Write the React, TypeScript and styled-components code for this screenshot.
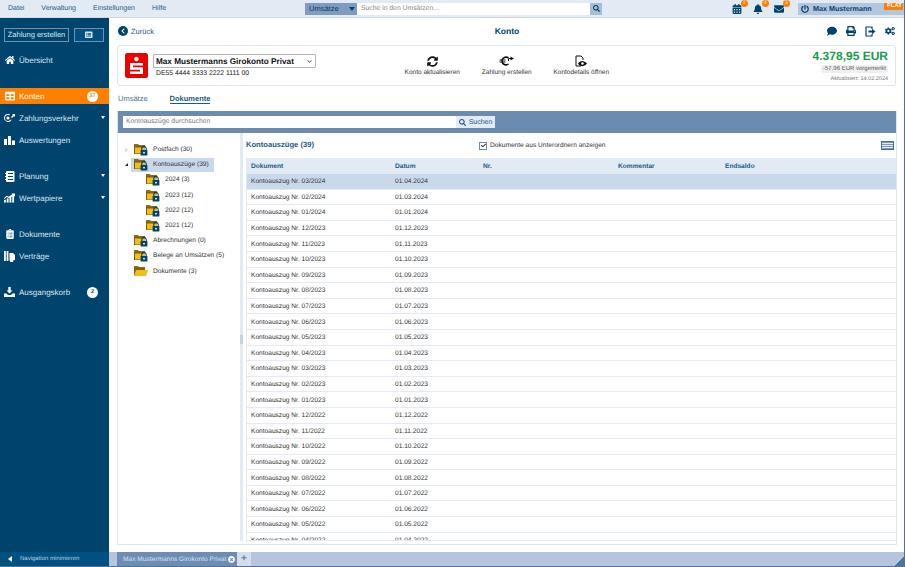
import React from "react";
import styled, { createGlobalStyle } from "styled-components";
import {
  FaHome,
  FaChevronDown,
  FaSearch,
  FaBell,
  FaEnvelope,
  FaPrint,
  FaComment,
  FaCogs,
  FaSyncAlt,
  FaChevronLeft,
  FaTimesCircle,
  FaCheck,
  FaPowerOff,
  FaTable,
  FaClipboardList,
  FaListAlt,
  FaCalendarAlt,
} from "react-icons/fa";

const Colors = {
  navy: "#00446e",
  navyLight: "#005080",
  orange: "#ff7f00",
  pale: "#e2eaf3",
  band: "#6b8cb0",
  status: "#b4c6dc",
  selected: "#c9d9eb",
  line: "#dde5ef",
  text: "#333",
  link: "#1d5a85",
};

const GlobalStyle = createGlobalStyle`
  html, body { margin: 0; padding: 0; background: #fff; }
  body {
    font-family: "Liberation Sans", Arial, sans-serif;
    text-rendering: geometricPrecision;
  }
`;

const Page = styled.div`
  width: 905px;
  height: 567px;
  display: flex;
  flex-direction: column;
  overflow: hidden;
  border-right: 1px solid #4f7396;
  border-bottom: 1px solid #4f7396;
  box-sizing: border-box;
  color: ${Colors.text};
`;

/* top bar */
const TopBar = styled.div`
  height: 17px;
  flex: none;
  display: flex;
  align-items: center;
  background: ${Colors.pale};
  border-bottom: 1px solid #cfdbe8;
`;
const Menu = styled.div`
  display: flex;
  gap: 17px;
  padding-left: 8px;
  width: 305px;
  box-sizing: border-box;
  font-size: 7px;
  color: #2a5a80;
`;
const SearchGroup = styled.div`
  display: flex;
  height: 12px;
  width: 297px;
`;
const ScopeSelect = styled.div`
  width: 52px;
  background: #7f9cc0;
  color: #0d3a5c;
  font-size: 7.5px;
  line-height: 12px;
  padding-left: 4px;
  box-sizing: border-box;
  position: relative;
  &::after {
    content: "";
    position: absolute;
    right: 2px;
    top: 4px;
    border-left: 3px solid transparent;
    border-right: 3px solid transparent;
    border-top: 4px solid ${Colors.navy};
  }
`;
const GlobalInput = styled.div`
  flex: 1;
  background: #fff;
  color: #888;
  font-size: 6.8px;
  line-height: 12px;
  padding-left: 4px;
`;
const GlobalButton = styled.div`
  width: 12px;
  background: #a9bdd5;
  color: ${Colors.navy};
  display: flex;
  align-items: center;
  justify-content: center;
  font-size: 7px;
`;
const TopIcons = styled.div`
  margin-left: auto;
  display: flex;
  align-items: center;
  gap: 11px;
  color: ${Colors.navy};
  font-size: 10px;
`;
const TopIcon = styled.span`
  position: relative;
  display: flex;
  width: 10px;
  justify-content: center;
`;
const Count = styled.span`
  position: absolute;
  right: -6px;
  top: -4px;
  width: 7px;
  height: 7px;
  border-radius: 50%;
  background: ${Colors.orange};
  color: #fff;
  font-size: 5px;
  line-height: 7px;
  text-align: center;
`;
const UserBlock = styled.div`
  position: relative;
  width: 106px;
  height: 12px;
  margin-left: 14px;
  background: ${Colors.status};
  display: flex;
  align-items: center;
  gap: 4px;
  padding-left: 3px;
  box-sizing: border-box;
  color: ${Colors.navy};
  font-size: 7.2px;
  font-weight: bold;
  svg { font-size: 8px; }
`;
const Flat = styled.span`
  position: absolute;
  right: 1px;
  top: 0;
  background: ${Colors.orange};
  color: #fff;
  font-size: 6px;
  line-height: 7px;
  padding: 0 1px 0 3px;
`;

/* body */
const Body = styled.div`
  flex: 1;
  min-height: 0;
  display: flex;
`;
const Sidebar = styled.nav`
  width: 109px;
  flex: none;
  background: ${Colors.navy};
  display: flex;
  flex-direction: column;
  color: #dbe6f0;
`;
const SideButtons = styled.div`
  display: flex;
  gap: 5px;
  padding: 10px 5px 0 4px;
  height: 14px;
  margin-bottom: 10px;
`;
const SideButton = styled.div<{ $wide?: boolean }>`
  width: ${(p) => (p.$wide ? "65px" : "30px")};
  box-sizing: border-box;
  height: 14px;
  border: 1px solid #6d93b3;
  background: ${(p) => (p.$wide ? "transparent" : Colors.navyLight)};
  font-size: 7.5px;
  line-height: 12px;
  text-align: center;
  display: flex;
  align-items: center;
  justify-content: center;
`;
const NavGroup = styled.div`
  margin-bottom: 14px;
`;
const NavItem = styled.div<{ $active?: boolean }>`
  position: relative;
  height: 16px;
  margin-bottom: 6px;
  display: flex;
  align-items: center;
  padding-left: 4px;
  gap: 4px;
  font-size: 8px;
  background: ${(p) => (p.$active ? Colors.orange : "transparent")};
  color: ${(p) => (p.$active ? "#fff" : "#dbe6f0")};
`;
const NavIcon = styled.span`
  width: 11px;
  display: flex;
  justify-content: center;
  font-size: 10px;
  color: #fff;
`;
const NavBadge = styled.span<{ $active?: boolean }>`
  position: absolute;
  right: 11px;
  top: 2.5px;
  width: 11px;
  height: 11px;
  border-radius: 50%;
  background: #fff;
  color: ${(p) => (p.$active ? Colors.orange : Colors.navy)};
  font-size: 5.5px;
  font-weight: bold;
  line-height: 11px;
  text-align: center;
`;
const NavCaret = styled.span`
  position: absolute;
  right: 4px;
  top: 6px;
  border-left: 2.5px solid transparent;
  border-right: 2.5px solid transparent;
  border-top: 3.5px solid #fff;
`;
const SideFooter = styled.div`
  margin-top: auto;
  height: 14px;
  background: ${Colors.navyLight};
  display: flex;
  align-items: center;
  gap: 8px;
  padding-left: 8px;
  font-size: 6px;
  color: #b9cfe0;
`;
const FooterArrow = styled.span`
  border-top: 3px solid transparent;
  border-bottom: 3px solid transparent;
  border-right: 4px solid #fff;
`;

const Main = styled.main`
  flex: 1;
  min-width: 0;
  display: flex;
  flex-direction: column;
`;
const Content = styled.div`
  flex: 1;
  min-height: 0;
  display: flex;
  flex-direction: column;
  padding: 0 7px 7px 8px;
`;
const HeaderRow = styled.div`
  height: 26px;
  padding-bottom: 1px;
  flex: none;
  display: grid;
  grid-template-columns: 1fr auto 1fr;
  align-items: center;
`;
const Back = styled.div`
  display: flex;
  align-items: center;
  gap: 3px;
  font-size: 7.5px;
  color: #2a5a80;
  padding-left: 1px;
`;
const BackCircle = styled.span`
  width: 10px;
  height: 10px;
  border-radius: 50%;
  background: ${Colors.navy};
  color: #fff;
  display: flex;
  align-items: center;
  justify-content: center;
  font-size: 6px;
`;
const Title = styled.div`
  font-size: 8.5px;
  font-weight: bold;
  color: ${Colors.navy};
`;
const HeaderIcons = styled.div`
  display: flex;
  justify-content: flex-end;
  align-items: center;
  gap: 9px;
  font-size: 10px;
  color: ${Colors.navy};
  padding-right: 2px;
`;

const AccountCard = styled.section`
  height: 41px;
  flex: none;
  box-sizing: border-box;
  border: 1px solid ${Colors.line};
  border-radius: 3px;
  display: flex;
  align-items: center;
  padding: 0 7px;
  margin-right: 1px;
  position: relative;
`;
const AccountInfo = styled.div`
  width: 163px;
  margin-left: 5px;
  flex: none;
`;
const AccountSelect = styled.div`
  height: 14px;
  box-sizing: border-box;
  border: 1px solid #b5b5b5;
  border-radius: 1px;
  display: flex;
  align-items: center;
  justify-content: space-between;
  padding: 0 3px 0 2px;
  font-size: 8.2px;
  font-weight: bold;
  color: #111;
  svg { font-size: 5px; color: #555; }
`;
const Iban = styled.div`
  font-size: 6.8px;
  padding: 2px 0 0 3px;
  color: #222;
`;
const Actions = styled.div`
  display: flex;
  margin-left: 79px;
`;
const Action = styled.div`
  width: 74.5px;
  display: flex;
  flex-direction: column;
  align-items: center;
  gap: 2px;
  font-size: 6.5px;
  color: #333;
  white-space: nowrap;
`;
const ActionIcon = styled.span`
  height: 12px;
  font-size: 11px;
  color: #111;
  display: flex;
  align-items: center;
`;
const Balance = styled.div`
  margin-left: auto;
  text-align: right;
  display: flex;
  flex-direction: column;
  align-items: flex-end;
`;
const Amount = styled.div`
  font-size: 12px;
  font-weight: bold;
  color: #1a9a50;
  line-height: 14px;
`;
const Pending = styled.div`
  font-size: 6px;
  color: #555;
  background: #efefef;
  border-radius: 3px;
  padding: 0 2px;
  line-height: 8px;
  margin-top: 2px;
`;
const Updated = styled.div`
  font-size: 5.5px;
  color: #777;
  margin-top: 3px;
`;

const Tabs = styled.div`
  height: 26px;
  flex: none;
  display: flex;
  gap: 22px;
  align-items: center;
  padding-left: 1px;
  font-size: 7.5px;
`;
const Tab = styled.span<{ $active?: boolean }>`
  color: ${(p) => (p.$active ? Colors.link : "#4a7396")};
  font-weight: ${(p) => (p.$active ? "bold" : "normal")};
  border-bottom: 1px solid ${(p) => (p.$active ? Colors.link : "transparent")};
`;

const Panel = styled.section`
  flex: 1;
  min-height: 0;
  display: flex;
  flex-direction: column;
  border: 1px solid ${Colors.line};
  border-top: 0;
  margin-top: -1px;
`;
const SearchBand = styled.div`
  height: 22px;
  flex: none;
  background: ${Colors.band};
  display: flex;
  align-items: center;
  padding-left: 5px;
`;
const SearchInput = styled.div`
  width: 333px;
  height: 12px;
  background: #fff;
  font-size: 6.8px;
  line-height: 12px;
  color: #777;
  padding-left: 3px;
  box-sizing: border-box;
`;
const SearchButton = styled.div`
  width: 39px;
  height: 12px;
  background: ${Colors.pale};
  color: ${Colors.link};
  font-size: 7px;
  display: flex;
  align-items: center;
  justify-content: center;
  gap: 3px;
  svg { font-size: 7px; }
`;
const Split = styled.div`
  flex: 1;
  min-height: 0;
  display: flex;
  padding-bottom: 3px;
`;
const Tree = styled.div`
  width: 122px;
  flex: none;
  box-sizing: border-box;
  padding-top: 9px;
`;
const TreeRow = styled.div<{ $level?: number }>`
  height: 15.2px;
  display: flex;
  align-items: center;
  padding-left: ${(p) => (p.$level ? 19 : 7)}px;
`;
const Twisty = styled.span<{ $open?: boolean }>`
  width: 0;
  height: 0;
  margin-right: 3px;
  ${(p) =>
    p.$open
      ? `border-left: 3px solid transparent; border-bottom: 3px solid #222;`
      : `border-top: 3px solid transparent; border-bottom: 3px solid transparent; border-left: 3px solid #ddd;`}
`;
const TwistySpace = styled.span`
  width: 6px;
`;
const TreeLabel = styled.div<{ $selected?: boolean }>`
  display: flex;
  align-items: center;
  height: 14px;
  box-sizing: border-box;
  gap: 5px;
  padding: 0 3px;
  font-size: 6.6px;
  white-space: nowrap;
  color: #333;
  background: ${(p) => (p.$selected ? Colors.selected : "transparent")};
  width: ${(p) => (p.$selected ? "83px" : "auto")};
`;
const Splitter = styled.div`
  width: 3px;
  flex: none;
  background: ${Colors.pale};
  margin-right: 3px;
  position: relative;
  &::after {
    content: "";
    position: absolute;
    left: 0;
    top: 202px;
    width: 3px;
    height: 9px;
    background: #c5d2e0;
  }
`;
const ListPane = styled.div`
  flex: 1;
  min-width: 0;
  display: flex;
  flex-direction: column;
`;
const ListHead = styled.div`
  height: 25px;
  flex: none;
  display: flex;
  align-items: center;
  position: relative;
`;
const ListTitle = styled.div`
  width: 233px;
  font-size: 7.6px;
  font-weight: bold;
  color: ${Colors.link};
  margin-top: -2px;
`;
const CheckBox = styled.span`
  width: 8px;
  height: 8px;
  box-sizing: border-box;
  border: 1px solid #6b8cb0;
  display: flex;
  align-items: center;
  justify-content: center;
  font-size: 5px;
  color: #333;
  margin-right: 3px;
`;
const CheckLabel = styled.span`
  font-size: 6.6px;
  color: #333;
`;
const ListButton = styled.span`
  margin-left: auto;
  margin-right: 2px;
  width: 13px;
  height: 9px;
  box-sizing: border-box;
  border: 1px solid #3f7096;
  background: repeating-linear-gradient(#7e9ab6 0 1px, #e2eaf3 1px 2px);
`;
const Table = styled.div`
  flex: 1;
  min-height: 0;
  overflow: hidden;
  border: solid ${Colors.pale};
  border-width: 0 0 1px 1px;
`;
const columns = "144px 88px 135px 107px 1fr";
const HeadRow = styled.div`
  display: grid;
  grid-template-columns: ${columns};
  height: 16px;
  align-items: center;
  background: ${Colors.pale};
  font-size: 6.6px;
  font-weight: bold;
  color: ${Colors.link};
  padding-left: 4px;
`;
const Row = styled.div<{ $selected?: boolean }>`
  display: grid;
  grid-template-columns: ${columns};
  height: 15.6px;
  box-sizing: border-box;
  align-items: center;
  border-bottom: 1px solid ${Colors.pale};
  padding: 1px 0 0 4px;
  font-size: 6.6px;
  color: #333;
  background: ${(p) => (p.$selected ? Colors.selected : "#fff")};
`;

const TabBar = styled.div`
  height: 14px;
  flex: none;
  background: ${Colors.status};
  display: flex;
  padding-left: 8px;
  position: relative;
`;
const OpenTab = styled.div`
  width: 120px;
  box-sizing: border-box;
  background: #6f8db2;
  color: #d6e2ef;
  font-size: 6.6px;
  white-space: nowrap;
  display: flex;
  align-items: center;
  justify-content: space-between;
  padding: 0 2px 0 6px;
  svg { font-size: 7px; color: #fff; }
`;
const AddTab = styled.div`
  width: 14px;
  background: #d4dfec;
  color: #5a80a6;
  font-size: 10px;
  line-height: 14px;
  text-align: center;
  font-weight: bold;
`;
const Grip = styled.span`
  position: absolute;
  right: 0;
  bottom: 0;
  width: 9px;
  height: 9px;
  background: linear-gradient(135deg, transparent 50%, #4f7396 50%);
`;

const SparkasseLogo = () => (
  <svg width="23" height="25" viewBox="0 0 23 25">
    <rect width="23" height="25" rx="2.5" fill="#ee0000" />
    <circle cx="11.5" cy="6" r="2.3" fill="#fff" />
    <path d="M5 10h13v2.5H8v1.8h10V21H5v-2.5h10v-1.8H5z" fill="#fff" />
  </svg>
);

const Folder = ({ locked = true }: { locked?: boolean }) => (
  <svg width="14" height="13" viewBox="0 0 14 13">
    <path d="M0 1h4l1 1h6v2H0z" fill="#8a6d1c" />
    <path d="M0 3h11v8H0z" fill="#7a5f14" />
    <path d={locked ? "M1 4.5h10v6H1z" : "M2 5h12l-2 6H0z"} fill="#f2bd1a" />
    {locked && (
      <g>
        <path
          d="M7.8 7V5.6a2.2 2.2 0 0 1 4.4 0V7"
          fill="none"
          stroke="#00446e"
          strokeWidth="1.1"
        />
        <rect x="6.6" y="7" width="6.8" height="5.6" rx=".6" fill="#00446e" />
        <circle cx="10" cy="9.7" r=".9" fill="#fff" />
      </g>
    )}
  </svg>
);

/* sidebar drawings */
const TransferIcon = () => (
  <svg width="11" height="10" viewBox="0 0 11 10" fill="currentColor">
    <path d="M4 1a4 4 0 1 0 3.6 5.8H6.2A2.6 2.6 0 0 1 4 8 3 3 0 0 1 4 2c.5 0 1 .1 1.4.3l.7-.9A4 4 0 0 0 4 1z" />
    <circle cx="4" cy="5" r="1.6" />
    <path d="M7 4l2-2-1-1h3v3l-1-1-2 2z" />
  </svg>
);
const BarsIcon = () => (
  <svg width="11" height="10" viewBox="0 0 11 10" fill="currentColor">
    <rect x="0" y="4" width="3" height="6" />
    <rect x="4" y="1" width="3" height="9" />
    <rect x="8" y="5.5" width="3" height="4.5" />
  </svg>
);
const PlanIcon = () => (
  <svg width="10" height="11" viewBox="0 0 10 11">
    <rect x="1" y="0" width="8.5" height="11" rx="1" fill="currentColor" />
    <path d="M3 2.5h5M3 5.5h5M3 8.5h5" stroke="#00446e" strokeWidth="1" />
    <path d="M0 2.5h2M0 5.5h2M0 8.5h2" stroke="currentColor" strokeWidth="1" />
  </svg>
);
const StockIcon = () => (
  <svg width="12" height="10" viewBox="0 0 12 10" fill="currentColor">
    <rect x="0" y="7" width="2" height="3" />
    <rect x="3" y="5.5" width="2" height="4.5" />
    <rect x="6" y="4" width="2" height="6" />
    <rect x="9" y="2.5" width="2" height="7.5" />
    <path d="M0 5l3-2.5 2 1L9 1 8 0h4v3.5L11 2.500 5.200 5 3 4 .5 6z" />
  </svg>
);
const ContractIcon = () => (
  <svg width="11" height="11" viewBox="0 0 11 11" fill="currentColor">
    <rect x="0" y="0" width="1.8" height="10" />
    <rect x="2.600" y="0" width="1.8" height="10" />
    <path d="M5.500 2h3.500l2 2v5H9.500l-.5 2H6.500l-1-2z" />
  </svg>
);
const OutboxIcon = () => (
  <svg width="11" height="10" viewBox="0 0 11 10" fill="currentColor">
    <path d="M4.300 0h2.400v3.500H8.500l-3 3-3-3h1.800z" />
    <path d="M0 6.500h2.500L4 8h3l1.500-1.500H11V10H0z" />
  </svg>
);

/* toolbar drawings */
const ExportIcon = () => (
  <svg width="11" height="11" viewBox="0 0 11 11">
    <path
      d="M7 3V1H1v9h6V8"
      fill="none"
      stroke="currentColor"
      strokeWidth="1.200"
    />
    <path d="M3.500 4.500H7V2.800L10.500 5.500 7 8.200V6.500H3.500z" fill="currentColor" />
  </svg>
);
const EuroArrowIcon = () => (
  <svg width="15" height="12" viewBox="0 0 15 12">
    <path
      d="M9.500 3A4 4 0 0 0 3 6a4 4 0 0 0 6.500 3"
      fill="none"
      stroke="currentColor"
      strokeWidth="1.600"
    />
    <path d="M0.500 5h6M0.500 7h6" stroke="currentColor" strokeWidth="1" />
    <path
      d="M9.500 6V3.500H12"
      fill="none"
      stroke="currentColor"
      strokeWidth="1"
    />
    <path d="M11.500 1.500L15 3.500 11.500 5.500z" fill="currentColor" />
  </svg>
);
const FileEyeIcon = () => (
  <svg width="14" height="12" viewBox="0 0 14 12">
    <path
      d="M7 11H2V1h5l2 2v2"
      fill="none"
      stroke="currentColor"
      strokeWidth="1"
    />
    <path d="M4 8.500c2-3.500 6-3.500 9 0-3 3.500-7 3.500-9 0z" fill="currentColor" />
    <circle cx="8.500" cy="8.500" r="1.300" fill="#fff" />
  </svg>
);

const navGroups = [
  [{ label: "Übersicht", icon: <FaHome /> }],
  [
    { label: "Konten", icon: <FaTable />, active: true, badge: "37" },
    { label: "Zahlungsverkehr", icon: <TransferIcon />, caret: true },
    { label: "Auswertungen", icon: <BarsIcon /> },
  ],
  [
    { label: "Planung", icon: <PlanIcon />, caret: true },
    { label: "Wertpapiere", icon: <StockIcon />, caret: true },
  ],
  [
    { label: "Dokumente", icon: <FaClipboardList /> },
    { label: "Verträge", icon: <ContractIcon /> },
  ],
  [{ label: "Ausgangskorb", icon: <OutboxIcon />, badge: "2" }],
];

const treeItems = [
  { label: "Postfach (30)", twisty: "closed" },
  { label: "Kontoauszüge (39)", twisty: "open", selected: true },
  { label: "2024 (3)", level: 1 },
  { label: "2023 (12)", level: 1 },
  { label: "2022 (12)", level: 1 },
  { label: "2021 (12)", level: 1 },
  { label: "Abrechnungen (0)" },
  { label: "Belege an Umsätzen (5)" },
  { label: "Dokumente (3)", open: true },
];

const pad = (n: number) => String(n).padStart(2, "0");
const statements: { name: string; date: string }[] = [
  { name: "03/2024", date: "01.04.2024" },
  { name: "02/2024", date: "01.03.2024" },
  { name: "01/2024", date: "01.01.2024" },
];
for (let i = 0; i < 21; i++) {
  const month = ((12 - i - 1 + 24) % 12) + 1;
  const year = i < 12 ? 2023 : 2022;
  statements.push({
    name: `${pad(month)}/${year}`,
    date: `01.${pad(month)}.${year}`,
  });
}

export default function App() {
  return (
    <Page>
      <GlobalStyle />
      <TopBar>
        <Menu>
          <span>Datei</span>
          <span>Verwaltung</span>
          <span>Einstellungen</span>
          <span>Hilfe</span>
        </Menu>
        <SearchGroup>
          <ScopeSelect>Umsätze</ScopeSelect>
          <GlobalInput>Suche in den Umsätzen...</GlobalInput>
          <GlobalButton>
            <FaSearch />
          </GlobalButton>
        </SearchGroup>
        <TopIcons>
          <TopIcon>
            <FaCalendarAlt />
            <Count>1</Count>
          </TopIcon>
          <TopIcon>
            <FaBell />
            <Count>4</Count>
          </TopIcon>
          <TopIcon>
            <FaEnvelope />
            <Count>3</Count>
          </TopIcon>
        </TopIcons>
        <UserBlock>
          <FaPowerOff />
          Max Mustermann
          <Flat>FLAT</Flat>
        </UserBlock>
      </TopBar>
      <Body>
        <Sidebar>
          <SideButtons>
            <SideButton $wide>Zahlung erstellen</SideButton>
            <SideButton>
              <FaListAlt />
            </SideButton>
          </SideButtons>
          {navGroups.map((group, i) => (
            <NavGroup key={i}>
              {group.map((item: any) => (
                <NavItem key={item.label} $active={item.active}>
                  <NavIcon>{item.icon}</NavIcon>
                  {item.label}
                  {item.badge && (
                    <NavBadge $active={item.active}>{item.badge}</NavBadge>
                  )}
                  {item.caret && <NavCaret />}
                </NavItem>
              ))}
            </NavGroup>
          ))}
          <SideFooter>
            <FooterArrow />
            Navigation minimieren
          </SideFooter>
        </Sidebar>
        <Main>
          <Content>
            <HeaderRow>
              <Back>
                <BackCircle>
                  <FaChevronLeft />
                </BackCircle>
                Zurück
              </Back>
              <Title>Konto</Title>
              <HeaderIcons>
                <FaComment />
                <FaPrint />
                <ExportIcon />
                <FaCogs />
              </HeaderIcons>
            </HeaderRow>
            <AccountCard>
              <SparkasseLogo />
              <AccountInfo>
                <AccountSelect>
                  Max Mustermanns Girokonto Privat
                  <FaChevronDown />
                </AccountSelect>
                <Iban>DE55 4444 3333 2222 1111 00</Iban>
              </AccountInfo>
              <Actions>
                <Action>
                  <ActionIcon>
                    <FaSyncAlt />
                  </ActionIcon>
                  Konto aktualisieren
                </Action>
                <Action>
                  <ActionIcon>
                    <EuroArrowIcon />
                  </ActionIcon>
                  Zahlung erstellen
                </Action>
                <Action>
                  <ActionIcon>
                    <FileEyeIcon />
                  </ActionIcon>
                  Kontodetails öffnen
                </Action>
              </Actions>
              <Balance>
                <Amount>4.378,95 EUR</Amount>
                <Pending>-57,96 EUR vorgemerkt</Pending>
                <Updated>Aktualisiert: 14.02.2024</Updated>
              </Balance>
            </AccountCard>
            <Tabs>
              <Tab>Umsätze</Tab>
              <Tab $active>Dokumente</Tab>
            </Tabs>
            <Panel>
              <SearchBand>
                <SearchInput>Kontoauszüge durchsuchen</SearchInput>
                <SearchButton>
                  <FaSearch />
                  Suchen
                </SearchButton>
              </SearchBand>
              <Split>
                <Tree>
                  {treeItems.map((t) => (
                    <TreeRow key={t.label} $level={t.level}>
                      {t.twisty ? (
                        <Twisty $open={t.twisty === "open"} />
                      ) : (
                        <TwistySpace />
                      )}
                      <TreeLabel $selected={t.selected}>
                        <Folder locked={!t.open} />
                        {t.label}
                      </TreeLabel>
                    </TreeRow>
                  ))}
                </Tree>
                <Splitter />
                <ListPane>
                  <ListHead>
                    <ListTitle>Kontoauszüge (39)</ListTitle>
                    <CheckBox>
                      <FaCheck />
                    </CheckBox>
                    <CheckLabel>Dokumente aus Unterordnern anzeigen</CheckLabel>
                    <ListButton />
                  </ListHead>
                  <Table>
                    <HeadRow>
                      <span>Dokument</span>
                      <span>Datum</span>
                      <span>Nr.</span>
                      <span>Kommentar</span>
                      <span>Endsaldo</span>
                    </HeadRow>
                    {statements.map((s, i) => (
                      <Row key={s.name} $selected={i === 0}>
                        <span>Kontoauszug Nr. {s.name}</span>
                        <span>{s.date}</span>
                      </Row>
                    ))}
                  </Table>
                </ListPane>
              </Split>
            </Panel>
          </Content>
          <TabBar>
            <OpenTab>
              Max Mustermanns Girokonto Privat
              <FaTimesCircle />
            </OpenTab>
            <AddTab>+</AddTab>
            <Grip />
          </TabBar>
        </Main>
      </Body>
    </Page>
  );
}
